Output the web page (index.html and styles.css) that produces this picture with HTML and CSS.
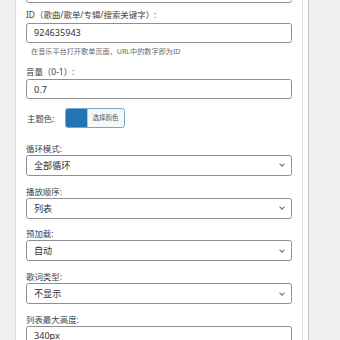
FILE: index.html
```html
<!DOCTYPE html>
<html lang="zh-CN">
<head>
    <meta charset="UTF-8">
    <meta name="viewport" content="width=device-width, initial-scale=1.0">
    <title>播放器设置</title>
    <link rel="stylesheet" href="styles.css">
</head>
<body>
    <div class="page">
        <div class="side-left"></div>
        <div class="panel">
            <form class="settings">
                <!-- 上一个输入框（只露出底部） -->
                <div class="field field-top">
                    <input type="text" class="text-input" value="">
                </div>

                <div class="field field-text">
                    <label>ID（歌曲/歌单/专辑/搜索关键字）:</label>
                    <input type="text" class="text-input" value="924635943">
                    <p class="description">在音乐平台打开歌单页面，URL中的数字即为ID</p>
                </div>

                <div class="field field-text">
                    <label>音量（0-1）:</label>
                    <input type="text" class="text-input" value="0.7">
                </div>

                <div class="field-color">
                    <span class="color-label">主题色:</span>
                    <button type="button" class="color-result">
                        <span class="swatch"></span>
                        <span class="color-text">选择颜色</span>
                    </button>
                </div>

                <div class="field">
                    <label>循环模式:</label>
                    <div class="select">全部循环</div>
                </div>

                <div class="field">
                    <label>播放顺序:</label>
                    <div class="select">列表</div>
                </div>

                <div class="field">
                    <label>预加载:</label>
                    <div class="select">自动</div>
                </div>

                <div class="field">
                    <label>歌词类型:</label>
                    <div class="select">不显示</div>
                </div>

                <div class="field">
                    <label>列表最大高度:</label>
                    <input type="text" class="text-input" value="340px">
                </div>
            </form>
        </div>
        <div class="gutter"></div>
        <div class="side-right"></div>
    </div>
</body>
</html>
```

FILE: styles.css
```css
* {
    margin: 0;
    padding: 0;
    box-sizing: border-box;
}

body {
    font-family: "Noto Sans", "Noto Sans CJK SC", sans-serif;
    background-color: #f0f0f1;
    color: #1d2327;
    overflow: hidden;
}

.page {
    display: flex;
    height: 340px;
}

.side-left {
    width: 16px;
    background-color: #f0f0f1;
    border-right: 1px solid #dcdcde;
}

.panel {
    width: 287px;
    background-color: #fff;
    border-right: 1px solid #dcdcde;
    padding: 0 10px;
}

.gutter {
    width: 6px;
    background-color: #fff;
    border-right: 1px solid #c3c4c7;
}

.side-right {
    flex: 1;
    background-color: #f0f0f1;
}

.settings {
    margin-top: -17px;
}

.field {
    margin-bottom: 8.75px;
}

.field label {
    display: block;
    font-size: 8.45px;
    line-height: 13px;
    color: #3c434a;
}

.field-top {
    margin-bottom: 5px;
}

.field-text label {
    margin-bottom: 1.5px;
}

.text-input,
.select {
    display: block;
    width: 266px;
    height: 20px;
    padding: 0 7px;
    font-family: inherit;
    font-size: 9.1px;
    color: #2c3338;
    background-color: #fff;
    border: 1px solid #8c8f94;
    border-radius: 2.6px;
    outline: none;
}

.select {
    height: 21px;
    line-height: 19px;
    position: relative;
}

/* 下拉箭头 */
.select::after {
    content: "";
    position: absolute;
    right: 7px;
    top: 6.5px;
    width: 3px;
    height: 3px;
    border-right: 1px solid #646970;
    border-bottom: 1px solid #646970;
    transform: rotate(45deg);
}

.description {
    font-size: 7.15px;
    line-height: 10px;
    color: #646970;
    margin: 3px 0 0 5px;
}

.field-text + .field-text {
    margin-top: 9px;
}

.field-color {
    display: flex;
    align-items: center;
    gap: 10px;
    margin: 8px 0 14px 1px;
}

.color-label {
    font-size: 8.45px;
    color: #3c434a;
}

.color-result {
    display: flex;
    height: 20px;
    width: 60px;
    border: 1px solid #7aa6cc;
    border-radius: 2.6px;
    overflow: hidden;
    background-color: #f6f7f7;
    cursor: pointer;
    font-family: inherit;
}

.swatch {
    width: 21px;
    background-color: #2374b4;
}

.color-text {
    flex: 1;
    font-size: 6.5px;
    line-height: 18px;
    color: #50575e;
    border-left: 1px solid #c3c4c7;
}
```
